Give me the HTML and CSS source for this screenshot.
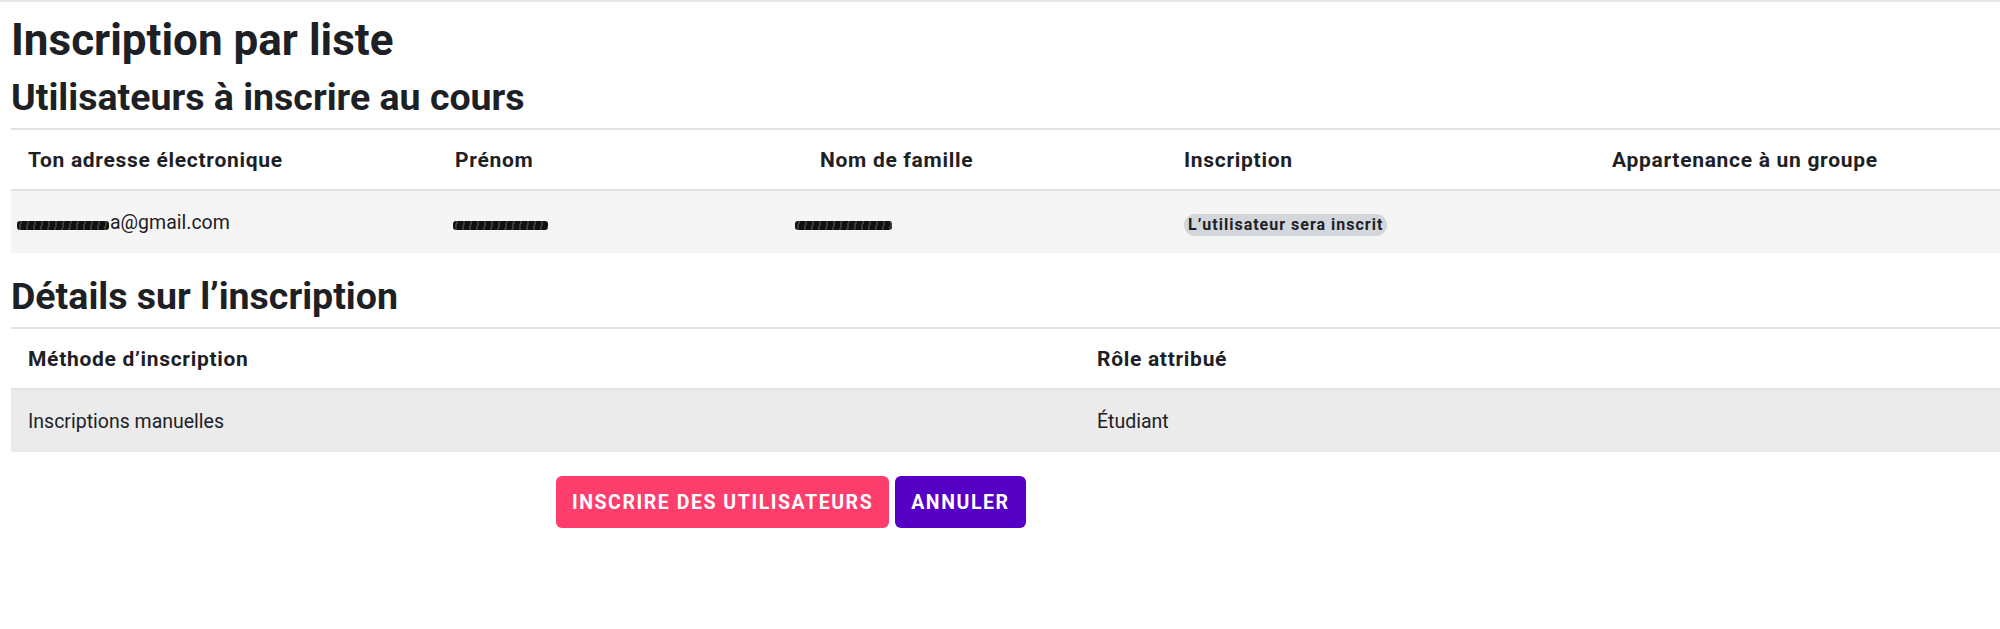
FILE: index.html
```html
<!DOCTYPE html>
<html lang="fr">
<head>
<meta charset="utf-8">
<title>Inscription par liste</title>
<link rel="stylesheet" href="styles.css">
</head>
<body>
<div class="page">
  <h2 class="title">Inscription par liste</h2>
  <h3 class="section">Utilisateurs à inscrire au cours</h3>
  <table class="grid users">
    <colgroup>
      <col class="c-email"><col class="c-first"><col class="c-last"><col class="c-status"><col>
    </colgroup>
    <thead>
      <tr>
        <th>Ton adresse électronique</th>
        <th>Prénom</th>
        <th>Nom de famille</th>
        <th>Inscription</th>
        <th>Appartenance à un groupe</th>
      </tr>
    </thead>
    <tbody>
      <tr class="light">
        <td><span class="scribble s-email"></span>a@gmail.com</td>
        <td><span class="scribble s-first"></span></td>
        <td><span class="scribble s-last"></span></td>
        <td><span class="badge">L’utilisateur sera inscrit</span></td>
        <td></td>
      </tr>
    </tbody>
  </table>

  <h3 class="section spaced">Détails sur l’inscription</h3>
  <table class="grid details">
    <colgroup>
      <col class="c-method"><col>
    </colgroup>
    <thead>
      <tr>
        <th>Méthode d’inscription</th>
        <th>Rôle attribué</th>
      </tr>
    </thead>
    <tbody>
      <tr class="dark">
        <td>Inscriptions manuelles</td>
        <td>Étudiant</td>
      </tr>
    </tbody>
  </table>

  <div class="actions">
    <button class="btn btn-primary" type="button">Inscrire des utilisateurs</button>
    <button class="btn btn-secondary" type="button">Annuler</button>
  </div>
</div>
</body>
</html>
```
FILE: styles.css
```css
html, body {
  margin: 0;
  padding: 0;
  background: #ffffff;
}

body {
  font-family: Roboto, "Noto Sans", sans-serif;
  color: #1d2125;
  width: 2000px;
  overflow: hidden;
}

.page {
  border-top: 2px solid #e6e6e6;
  padding-left: 11px;
}

.title {
  font-size: 44px;
  line-height: 53px;
  font-weight: 700;
  margin: 12px 0 0;
}

.section {
  font-size: 37.5px;
  line-height: 47px;
  font-weight: 700;
  margin: 7px 0 7px;
}

.section.spaced {
  margin-top: 20px;
}

.grid {
  width: 1989px;
  border-collapse: separate;
  border-spacing: 0;
  table-layout: fixed;
}

.grid th {
  height: 59px;
  padding: 0 17px;
  text-align: left;
  font-size: 21px;
  font-weight: 700;
  letter-spacing: 0.7px;
  border-top: 2px solid #e2e2e2;
  border-bottom: 2px solid #e2e2e2;
  background: #ffffff;
  white-space: nowrap;
}

.grid td {
  height: 62px;
  padding: 0 17px;
  font-size: 19.5px;
  font-weight: 400;
  vertical-align: middle;
  white-space: nowrap;
}

.grid .light td { background: #f5f5f5; }
.grid .dark td { background: #ebebeb; height: 62px; }

.c-email { width: 427px; }
.c-first { width: 365px; }
.c-last { width: 364px; }
.c-status { width: 428px; }
.c-method { width: 1069px; }

.scribble {
  display: inline-block;
  height: 9px;
  vertical-align: -1px;
  background:
    repeating-linear-gradient(100deg, #111 0 3px, #3a3a3a 3px 5px, #111 5px 7px);
  border-radius: 3px;
}

.s-email { width: 92px; margin-left: -11px; margin-right: 1px; }
.s-first { width: 95px; margin-left: -2px; }
.s-last { width: 97px; margin-left: -25px; }

.badge {
  display: inline-block;
  background: #d3d7dc;
  color: #1d2125;
  font-size: 16px;
  font-weight: 700;
  letter-spacing: 1px;
  line-height: 22px;
  padding: 0 4px;
  border-radius: 11px;
  vertical-align: middle;
  margin-top: 5px;
}

.actions {
  display: flex;
  gap: 6px;
  margin-top: 24px;
  padding-left: 545px;
}

.btn {
  height: 52px;
  border: 0;
  border-radius: 6px;
  padding: 0 16px;
  font-family: Roboto, "Noto Sans", sans-serif;
  font-size: 19.5px;
  font-weight: 700;
  letter-spacing: 1.55px;
  text-transform: uppercase;
  color: #ffffff;
}

.btn-primary { background: #fd3d6b; }
.btn-secondary { background: #5600c5; }
```
